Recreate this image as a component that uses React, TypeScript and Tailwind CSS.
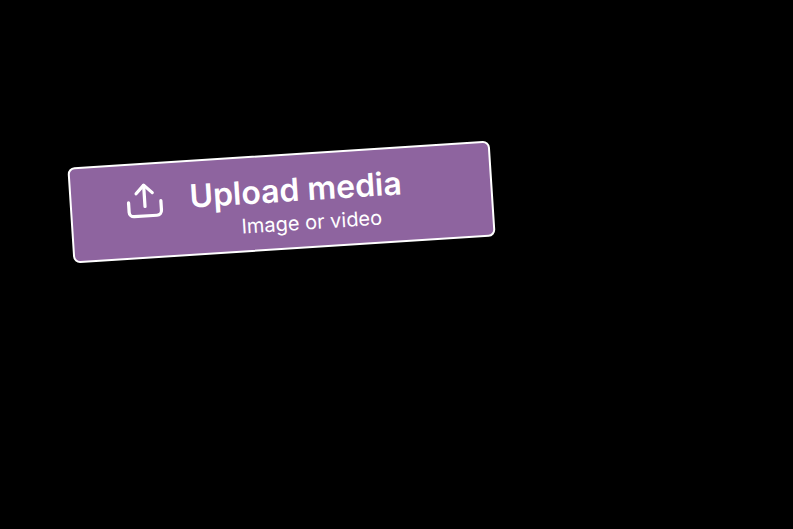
import React from "react";

export default function App() {
  return (
    <div className="h-[529px] w-[793px] overflow-hidden bg-black pl-[70px] pt-[154px] font-['Inter',sans-serif]">
      {/* Upload card */}
      <div className="flex h-[96px] w-[423px] -rotate-[3.68deg] items-start gap-[25px] rounded-[7px] border-2 border-white bg-[#8e649f] pl-[53px] pt-[15px] text-white">
        <svg width="40" height="40" viewBox="0 0 42 42" fill="none" stroke="currentColor" strokeWidth="3.4" strokeLinecap="round" strokeLinejoin="round" className="mt-[1px]">
          <path d="M21 27V5" />
          <path d="M12.500 13 21 4.500 29.500 13" />
          <path d="M4 22v10a5 5 0 0 0 5 5h24a5 5 0 0 0 5-5V22" />
        </svg>
        <div className="flex flex-col items-start">
          <span className="text-[32px] font-semibold leading-[40px]">Upload media</span>
          <span className="mt-[1px] pl-[50px] text-[20px] leading-[24px]">Image or video</span>
        </div>
      </div>
    </div>
  );
}
